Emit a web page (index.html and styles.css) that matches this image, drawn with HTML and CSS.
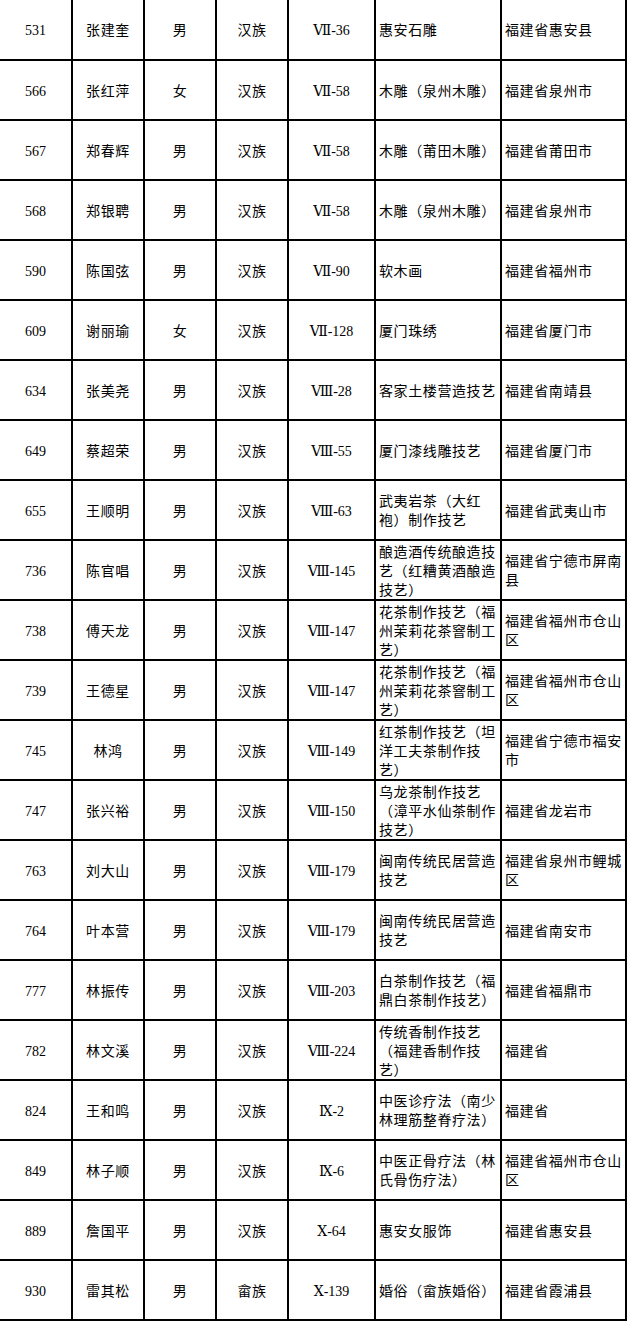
FILE: index.html
```html
<!DOCTYPE html>
<html lang="zh-CN">
<head>
<meta charset="utf-8">
<title>名单</title>
<link rel="stylesheet" href="styles.css">
</head>
<body>
<div class="sheet">
  <div class="row first"><div class="c num">531</div><div class="c">张建奎</div><div class="c">男</div><div class="c">汉族</div><div class="c code">Ⅶ-36</div><div class="c left">惠安石雕</div><div class="c left">福建省惠安县</div></div>
  <div class="row"><div class="c num">566</div><div class="c">张红萍</div><div class="c">女</div><div class="c">汉族</div><div class="c code">Ⅶ-58</div><div class="c left">木雕（泉州木雕）</div><div class="c left">福建省泉州市</div></div>
  <div class="row"><div class="c num">567</div><div class="c">郑春辉</div><div class="c">男</div><div class="c">汉族</div><div class="c code">Ⅶ-58</div><div class="c left">木雕（莆田木雕）</div><div class="c left">福建省莆田市</div></div>
  <div class="row"><div class="c num">568</div><div class="c">郑银聘</div><div class="c">男</div><div class="c">汉族</div><div class="c code">Ⅶ-58</div><div class="c left">木雕（泉州木雕）</div><div class="c left">福建省泉州市</div></div>
  <div class="row"><div class="c num">590</div><div class="c">陈国弦</div><div class="c">男</div><div class="c">汉族</div><div class="c code">Ⅶ-90</div><div class="c left">软木画</div><div class="c left">福建省福州市</div></div>
  <div class="row"><div class="c num">609</div><div class="c">谢丽瑜</div><div class="c">女</div><div class="c">汉族</div><div class="c code">Ⅶ-128</div><div class="c left">厦门珠绣</div><div class="c left">福建省厦门市</div></div>
  <div class="row"><div class="c num">634</div><div class="c">张美尧</div><div class="c">男</div><div class="c">汉族</div><div class="c code">Ⅷ-28</div><div class="c left">客家土楼营造技艺</div><div class="c left">福建省南靖县</div></div>
  <div class="row"><div class="c num">649</div><div class="c">蔡超荣</div><div class="c">男</div><div class="c">汉族</div><div class="c code">Ⅷ-55</div><div class="c left">厦门漆线雕技艺</div><div class="c left">福建省厦门市</div></div>
  <div class="row"><div class="c num">655</div><div class="c">王顺明</div><div class="c">男</div><div class="c">汉族</div><div class="c code">Ⅷ-63</div><div class="c left">武夷岩茶（大红袍）制作技艺</div><div class="c left">福建省武夷山市</div></div>
  <div class="row"><div class="c num">736</div><div class="c">陈官唱</div><div class="c">男</div><div class="c">汉族</div><div class="c code">Ⅷ-145</div><div class="c left">酿造酒传统酿造技艺（红糟黄酒酿造技艺）</div><div class="c left">福建省宁德市屏南县</div></div>
  <div class="row"><div class="c num">738</div><div class="c">傅天龙</div><div class="c">男</div><div class="c">汉族</div><div class="c code">Ⅷ-147</div><div class="c left">花茶制作技艺（福州茉莉花茶窨制工艺）</div><div class="c left">福建省福州市仓山区</div></div>
  <div class="row"><div class="c num">739</div><div class="c">王德星</div><div class="c">男</div><div class="c">汉族</div><div class="c code">Ⅷ-147</div><div class="c left">花茶制作技艺（福州茉莉花茶窨制工艺）</div><div class="c left">福建省福州市仓山区</div></div>
  <div class="row"><div class="c num">745</div><div class="c">林鸿</div><div class="c">男</div><div class="c">汉族</div><div class="c code">Ⅷ-149</div><div class="c left">红茶制作技艺（坦洋工夫茶制作技艺）</div><div class="c left">福建省宁德市福安市</div></div>
  <div class="row"><div class="c num">747</div><div class="c">张兴裕</div><div class="c">男</div><div class="c">汉族</div><div class="c code">Ⅷ-150</div><div class="c left">乌龙茶制作技艺（漳平水仙茶制作技艺）</div><div class="c left">福建省龙岩市</div></div>
  <div class="row"><div class="c num">763</div><div class="c">刘大山</div><div class="c">男</div><div class="c">汉族</div><div class="c code">Ⅷ-179</div><div class="c left">闽南传统民居营造技艺</div><div class="c left">福建省泉州市鲤城区</div></div>
  <div class="row"><div class="c num">764</div><div class="c">叶本营</div><div class="c">男</div><div class="c">汉族</div><div class="c code">Ⅷ-179</div><div class="c left">闽南传统民居营造技艺</div><div class="c left">福建省南安市</div></div>
  <div class="row"><div class="c num">777</div><div class="c">林振传</div><div class="c">男</div><div class="c">汉族</div><div class="c code">Ⅷ-203</div><div class="c left">白茶制作技艺（福鼎白茶制作技艺）</div><div class="c left">福建省福鼎市</div></div>
  <div class="row"><div class="c num">782</div><div class="c">林文溪</div><div class="c">男</div><div class="c">汉族</div><div class="c code">Ⅷ-224</div><div class="c left">传统香制作技艺（福建香制作技艺）</div><div class="c left">福建省</div></div>
  <div class="row"><div class="c num">824</div><div class="c">王和鸣</div><div class="c">男</div><div class="c">汉族</div><div class="c code">Ⅸ-2</div><div class="c left">中医诊疗法（南少林理筋整脊疗法）</div><div class="c left">福建省</div></div>
  <div class="row"><div class="c num">849</div><div class="c">林子顺</div><div class="c">男</div><div class="c">汉族</div><div class="c code">Ⅸ-6</div><div class="c left">中医正骨疗法（林氏骨伤疗法）</div><div class="c left">福建省福州市仓山区</div></div>
  <div class="row"><div class="c num">889</div><div class="c">詹国平</div><div class="c">男</div><div class="c">汉族</div><div class="c code">Ⅹ-64</div><div class="c left">惠安女服饰</div><div class="c left">福建省惠安县</div></div>
  <div class="row"><div class="c num">930</div><div class="c">雷其松</div><div class="c">男</div><div class="c">畲族</div><div class="c code">Ⅹ-139</div><div class="c left">婚俗（畲族婚俗）</div><div class="c left">福建省霞浦县</div></div>
</div>
</body>
</html>
```

FILE: styles.css
```css
html, body {
  margin: 0;
  padding: 0;
  background: #fff;
}

body {
  color: #000;
  font-family: "Noto Sans CJK SC", sans-serif;
  font-size: 14px;
  letter-spacing: 0.6px;
  line-height: 19px;
}

.sheet {
  width: 627px;
  display: flex;
  flex-direction: column;
}

.row {
  display: grid;
  grid-template-columns: 73px 72px 72px 72px 87px 126px 125px;
  height: 60px;
}

.row.first {
  height: 61px;
}

.c {
  box-sizing: border-box;
  border-right: 2px solid #000;
  border-bottom: 2px solid #000;
  display: flex;
  align-items: center;
  justify-content: center;
  text-align: center;
  padding: 0 1px;
  overflow: hidden;
}

.c.left {
  justify-content: flex-start;
  text-align: left;
  padding: 0 0 0 3px;
}

.num,
.code {
  font-family: "Liberation Serif", "DejaVu Serif", "Noto Sans CJK SC", serif;
  font-size: 14px;
  letter-spacing: 0;
  padding-top: 2px;
}
```
